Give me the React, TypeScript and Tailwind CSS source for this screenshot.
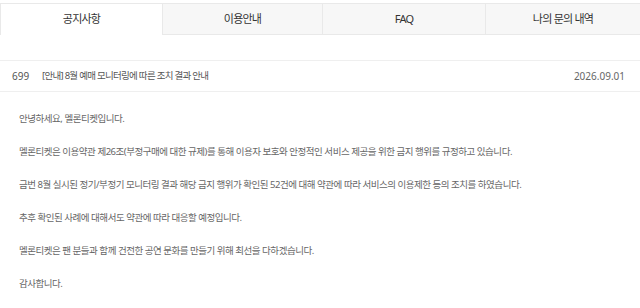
import React from 'react'

const tabs = ['공지사항', '이용안내', 'FAQ', '나의 문의 내역']

const paragraphs = [
  '안녕하세요, 멜론티켓입니다.',
  '멜론티켓은 이용약관 제26조(부정구매에 대한 규제)를 통해 이용자 보호와 안정적인 서비스 제공을 위한 금지 행위를 규정하고 있습니다.',
  '금번 8월 실시된 정기/부정기 모니터링 결과 해당 금지 행위가 확인된 52건에 대해 약관에 따라 서비스의 이용제한 등의 조치를 하였습니다.',
  '추후 확인된 사례에 대해서도 약관에 따라 대응할 예정입니다.',
  '멜론티켓은 팬 분들과 함께 건전한 공연 문화를 만들기 위해 최선을 다하겠습니다.',
  '감사합니다.',
]

export default function App() {
  return (
    <div
      className="w-[640px] h-[308px] overflow-hidden bg-white"
      style={{ fontFamily: '"Noto Sans", "Noto Sans CJK KR", sans-serif' }}
    >
      {/* Tabs */}
      <div className="mt-[3px] grid grid-cols-[162px_160px_163px_1fr] border-t border-[#e9e9e9]">
        {tabs.map((t, i) => (
          <div
            key={t}
            className={
              i === 0
                ? 'h-[31px] flex items-center justify-center text-[11px] tracking-[-0.07em] text-[#333] bg-white border-l border-[#e9e9e9]'
                : 'h-[31px] flex items-center justify-center text-[11px] tracking-[-0.07em] text-[#333] bg-[#f7f7f7] border-l border-b border-[#e9e9e9]'
            }
          >
            {t}
          </div>
        ))}
      </div>

      {/* Notice row */}
      <div className="mt-[25px] h-[32px] flex items-center border-y border-[#efefef] px-[12px] text-[10px] text-[#555]">
        <span className="w-[30px]">699</span>
        <span className="flex-1 text-[9.5px] tracking-[-0.075em]">[안내] 8월 예매 모니터링에 따른 조치 결과 안내</span>
        <span className="text-[#666] mr-[3px]">2026.09.01</span>
      </div>

      {/* Body */}
      <div className="pl-[19px] pt-[20px] flex flex-col gap-[19px] text-[9.5px] tracking-[-0.05em] text-[#666] leading-[14px]">
        {paragraphs.map((p, i) => (
          <p key={i}>{p}</p>
        ))}
      </div>
    </div>
  )
}
